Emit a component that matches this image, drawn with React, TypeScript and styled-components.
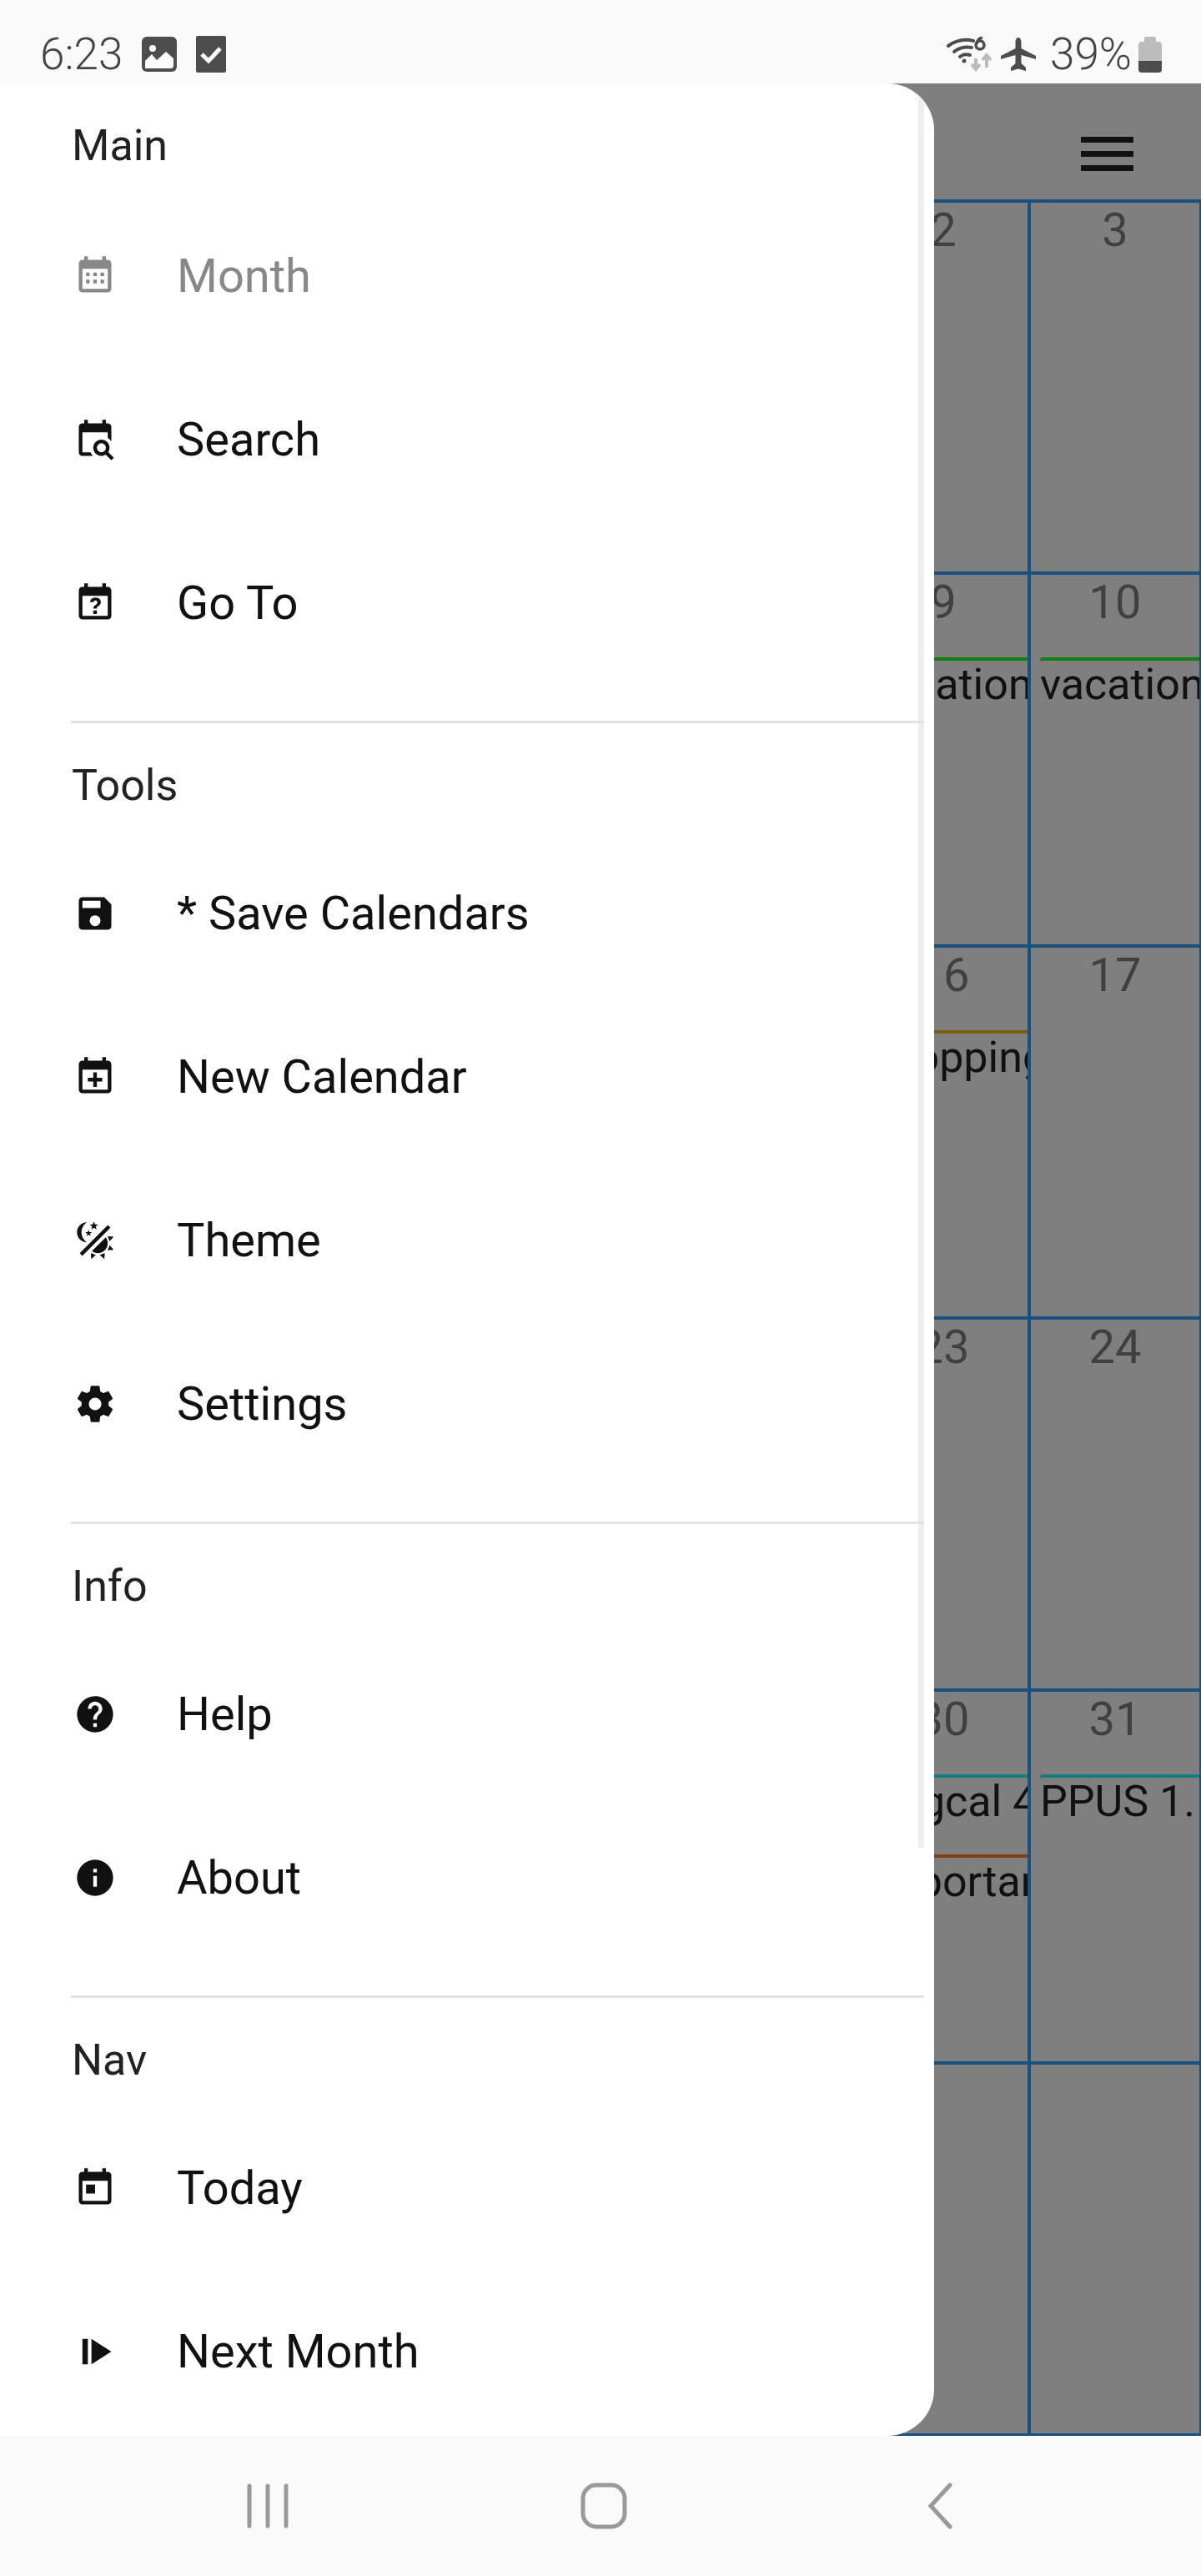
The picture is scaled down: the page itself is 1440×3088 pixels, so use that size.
import React from 'react';
import styled, { createGlobalStyle } from 'styled-components';

const GlobalStyle = createGlobalStyle`
  html, body {
    margin: 0;
    padding: 0;
    background: #fafafa;
    font-family: Roboto, "Liberation Sans", sans-serif;
  }
`;

const Screen = styled.div`
  width: 1440px;
  height: 3088px;
  display: flex;
  flex-direction: column;
  overflow: hidden;
`;

const StatusBar = styled.div`
  height: 100px;
  flex: none;
  background: #fafafa;
  color: #4d4d4d;
  display: flex;
  align-items: center;
  justify-content: space-between;
  padding: 30px 47px 0 48px;
  box-sizing: border-box;
`;

const StatusGroup = styled.div<{ $gap: number }>`
  display: flex;
  align-items: center;
  gap: ${p => p.$gap}px;
`;

const StatusText = styled.span`
  font-size: 53px;
  line-height: 56px;
  font-weight: 300;
  color: #444;
`;

const Stage = styled.div`
  position: relative;
  flex: 1;
  background: #fff;
  overflow: hidden;
`;

const Calendar = styled.div`
  display: flex;
  flex-direction: column;
  align-items: flex-end;
  height: 100%;
`;

const TopBar = styled.div`
  height: 141px;
  width: 100%;
  flex: none;
  display: flex;
  justify-content: flex-end;
  align-items: flex-start;
  padding: 64px 81px 0 0;
  box-sizing: border-box;
`;

const Hamburger = styled.div`
  width: 63px;
  display: flex;
  flex-direction: column;
  gap: 10px;
  span {
    display: block;
    height: 7px;
    background: #222;
  }
`;

const Grid = styled.div`
  width: 410px;
  display: grid;
  grid-template-columns: 206px 204px;
  grid-auto-rows: 446.33px;
  border-top: 4px solid #35a0fa;
  margin-top: -2px;
`;

const Cell = styled.div`
  border-right: 4px solid #35a0fa;
  border-bottom: 4px solid #35a0fa;
  min-width: 0;
  overflow: hidden;
  &:nth-child(even) {
    border-right-width: 2px;
  }
`;

const DayNumber = styled.div`
  height: 60px;
  margin-top: 3px;
  font-size: 56px;
  line-height: 60px;
  text-align: center;
  color: #808080;
`;

const CalEvent = styled.div<{ $color: string }>`
  margin: 36px 0 0 11px;
  border-top: 4px solid ${p => p.$color};
  border-top-left-radius: 3px;
  height: 60px;
  font-size: 52px;
  line-height: 58px;
  color: #222;
  white-space: nowrap;
  overflow: hidden;
  & + & {
    margin-top: 32px;
  }
`;

const Scrim = styled.div`
  position: absolute;
  inset: 0;
  background: rgba(0, 0, 0, 0.5);
`;

const Drawer = styled.nav`
  position: absolute;
  left: 0;
  top: 0;
  bottom: 0;
  width: 1120px;
  background: #fff;
  border-radius: 0 56px 56px 0;
  overflow: hidden;
  isolation: isolate;
`;

const ScrollThumb = styled.div`
  position: absolute;
  z-index: -1;
  left: 1101px;
  top: 16px;
  width: 7px;
  height: 2099px;
  background: #eeeeee;
`;

const Section = styled.section<{ $first?: boolean }>`
  margin: 0 12px 0 85px;
  padding-bottom: 43px;
  border-top: ${p => (p.$first ? 'none' : '3px solid #e2e2e2')};
`;

const SectionLabel = styled.div<{ $first?: boolean }>`
  padding: 47px 0 ${p => (p.$first ? 30 : 27)}px 1px;
  font-size: 52px;
  line-height: 56px;
  color: #222;
`;

const Item = styled.div<{ $active?: boolean }>`
  height: 196px;
  display: flex;
  align-items: center;
  gap: 72px;
  padding-left: 3px;
  font-size: 56px;
  color: ${p => (p.$active ? '#888888' : '#111111')};
`;

const ItemIcon = styled.svg`
  width: 52px;
  height: 52px;
  flex: none;
  fill: currentColor;
`;

const NavBar = styled.div`
  height: 168px;
  flex: none;
  background: #fafafa;
  display: grid;
  grid-template-columns: 400px 415px auto;
  align-items: center;
  padding-left: 296px;
  box-sizing: border-box;
`;

const NavIcon = styled.svg`
  display: block;
  fill: none;
  stroke: #999;
`;

const PlaneWrap = styled.div`
  display: flex;
  margin: 0 9px 0 2px;
`;

const icons = {
  month:
    'M9,10V12H7V10H9M13,10V12H11V10H13M17,10V12H15V10H17M19,3A2,2 0 0,1 21,5V19A2,2 0 0,1 19,21H5C3.89,21 3,20.1 3,19V5A2,2 0 0,1 5,3H6V1H8V3H16V1H18V3H19M19,19V8H5V19H19M9,14V16H7V14H9M13,14V16H11V14H13M17,14V16H15V14H17Z',
  search:
    'M15.5,12C18,12 20,14 20,16.5C20,17.38 19.75,18.21 19.31,18.9L22.39,22L21,23.39L17.88,20.32C17.19,20.75 16.37,21 15.5,21C13,21 11,19 11,16.5C11,14 13,12 15.5,12M15.5,14A2.5,2.5 0 0,0 13,16.5A2.5,2.5 0 0,0 15.5,19A2.5,2.5 0 0,0 18,16.5A2.5,2.5 0 0,0 15.5,14M19,8H5V19H9.5C9.81,19.75 10.26,20.42 10.81,21H5C3.89,21 3,20.1 3,19V5C3,3.89 3.89,3 5,3H6V1H8V3H16V1H18V3H19A2,2 0 0,1 21,5V13.03C20.5,12.22 19.8,11.54 19,11V8Z',
  goTo:
    'M6,1V3H5C3.89,3 3,3.89 3,5V19C3,20.1 3.9,21 5,21H19C20.1,21 21,20.1 21,19V5C21,3.9 20.1,3 19,3H18V1H16V3H8V1H6M5,8H19V19H5V8M12.19,9C11.32,9 10.62,9.2 10.08,9.59C9.56,10 9.3,10.57 9.31,11.36L9.32,11.39H11.25C11.26,11.09 11.35,10.86 11.53,10.7C11.71,10.55 11.93,10.47 12.19,10.47C12.5,10.47 12.76,10.57 12.94,10.75C13.12,10.94 13.2,11.2 13.2,11.5C13.2,11.82 13.13,12.09 12.97,12.32C12.83,12.55 12.62,12.75 12.36,12.91C11.85,13.25 11.5,13.55 11.31,13.82C11.11,14.08 11,14.5 11,15H13C13,14.69 13.04,14.44 13.13,14.26C13.22,14.08 13.39,13.9 13.64,13.74C14.09,13.5 14.46,13.21 14.75,12.81C15.04,12.41 15.19,12 15.19,11.5C15.19,10.74 14.92,10.13 14.38,9.68C13.85,9.23 13.12,9 12.19,9M11,16V18H13V16H11Z',
  save: 'M15,9H5V5H15M12,19A3,3 0 0,1 9,16A3,3 0 0,1 12,13A3,3 0 0,1 15,16A3,3 0 0,1 12,19M17,3H5C3.89,3 3,3.9 3,5V19A2,2 0 0,0 5,21H19A2,2 0 0,0 21,19V7L17,3Z',
  plus: 'M19 19V8H5V19H19M16 1H18V3H19C20.11 3 21 3.9 21 5V19C21 20.11 20.11 21 19 21H5C3.89 21 3 20.1 3 19V5C3 3.89 3.89 3 5 3H6V1H8V3H16V1M11 9.5H13V12.5H16V14.5H13V17.5H11V14.5H8V12.5H11V9.5Z',
  theme:
    'M7.5,2C5.71,3.15 4.5,5.18 4.5,7.5C4.5,9.82 5.71,11.85 7.53,13C4.46,13 2,10.54 2,7.5A5.5,5.5 0 0,1 7.5,2M19.07,3.5L20.5,4.93L4.93,20.5L3.5,19.07L19.07,3.5M12.89,5.93L11.41,5L9.97,6L10.39,4.3L9,3.24L10.75,3.12L11.33,1.47L12,3.1L13.73,3.13L12.38,4.26L12.89,5.93M9.59,9.54L8.43,8.81L7.31,9.59L7.65,8.27L6.56,7.44L7.92,7.35L8.37,6.06L8.88,7.33L10.24,7.36L9.19,8.23L9.59,9.54M19,13.5A5.5,5.5 0 0,1 13.5,19C12.28,19 11.15,18.6 10.24,17.93L17.93,10.24C18.6,11.15 19,12.28 19,13.5M14.6,20.08L17.37,18.93L17.13,22.28L14.6,20.08M18.93,17.38L20.08,14.61L22.28,17.15L18.93,17.38M20.08,12.42L18.94,9.64L22.28,9.88L20.08,12.42M9.63,18.93L12.4,20.08L9.87,22.27L9.63,18.93Z',
  cog: 'M12,15.5A3.5,3.5 0 0,1 8.5,12A3.5,3.5 0 0,1 12,8.5A3.5,3.5 0 0,1 15.5,12A3.5,3.5 0 0,1 12,15.5M19.43,12.97C19.47,12.65 19.5,12.33 19.5,12C19.5,11.67 19.47,11.34 19.43,11L21.54,9.37C21.73,9.22 21.78,8.95 21.66,8.73L19.66,5.27C19.54,5.05 19.27,4.96 19.05,5.05L16.56,6.05C16.04,5.66 15.5,5.32 14.87,5.07L14.5,2.42C14.46,2.18 14.25,2 14,2H10C9.75,2 9.54,2.18 9.5,2.42L9.13,5.07C8.5,5.32 7.96,5.66 7.44,6.05L4.95,5.05C4.73,4.96 4.46,5.05 4.34,5.27L2.34,8.73C2.21,8.95 2.27,9.22 2.46,9.37L4.57,11C4.53,11.34 4.5,11.67 4.5,12C4.5,12.33 4.53,12.65 4.57,12.97L2.46,14.63C2.27,14.78 2.21,15.05 2.34,15.27L4.34,18.73C4.46,18.95 4.73,19.03 4.95,18.95L7.44,17.94C7.96,18.34 8.5,18.68 9.13,18.93L9.5,21.58C9.54,21.82 9.75,22 10,22H14C14.25,22 14.46,21.82 14.5,21.58L14.87,18.93C15.5,18.67 16.04,18.34 16.56,17.94L19.05,18.95C19.27,19.03 19.54,18.95 19.66,18.73L21.66,15.27C21.78,15.05 21.73,14.78 21.54,14.63L19.43,12.97Z',
  help: 'M15.07,11.25L14.17,12.17C13.45,12.89 13,13.5 13,15H11V14.5C11,13.39 11.45,12.39 12.17,11.67L13.41,10.41C13.78,10.05 14,9.55 14,9C14,7.89 13.1,7 12,7A2,2 0 0,0 10,9H8A4,4 0 0,1 12,5A4,4 0 0,1 16,9C16,9.88 15.64,10.67 15.07,11.25M13,19H11V17H13M12,2A10,10 0 0,0 2,12A10,10 0 0,0 12,22A10,10 0 0,0 22,12C22,6.47 17.5,2 12,2Z',
  info: 'M13,9H11V7H13M13,17H11V11H13M12,2A10,10 0 0,0 2,12A10,10 0 0,0 12,22A10,10 0 0,0 22,12A10,10 0 0,0 12,2Z',
  today:
    'M7,10H12V15H7M19,19H5V8H19M19,3H18V1H16V3H8V1H6V3H5C3.89,3 3,3.9 3,5V19A2,2 0 0,0 5,21H19A2,2 0 0,0 21,19V5A2,2 0 0,0 19,3Z',
  next: 'M5,5V19H8V5M10,5V19L21,12',
};

const sections = [
  {
    title: 'Main',
    items: [
      { label: 'Month', icon: icons.month, active: true },
      { label: 'Search', icon: icons.search },
      { label: 'Go To', icon: icons.goTo },
    ],
  },
  {
    title: 'Tools',
    items: [
      { label: '* Save Calendars', icon: icons.save },
      { label: 'New Calendar', icon: icons.plus },
      { label: 'Theme', icon: icons.theme },
      { label: 'Settings', icon: icons.cog },
    ],
  },
  {
    title: 'Info',
    items: [
      { label: 'Help', icon: icons.help },
      { label: 'About', icon: icons.info },
    ],
  },
  {
    title: 'Nav',
    items: [
      { label: 'Today', icon: icons.today },
      { label: 'Next Month', icon: icons.next },
    ],
  },
];

const GREEN = '#25ff25';
const ORANGE = '#ffb428';
const TEAL = '#1effff';
const BROWN = '#fa8232';

const days: { day?: number; events?: { text: string; color: string }[] }[] = [
  { day: 2 },
  { day: 3 },
  { day: 9, events: [{ text: 'vacation', color: GREEN }] },
  { day: 10, events: [{ text: 'vacation', color: GREEN }] },
  { day: 16, events: [{ text: 'shopping', color: ORANGE }] },
  { day: 17 },
  { day: 23 },
  { day: 24 },
  {
    day: 30,
    events: [
      { text: 'Upgcal 4.0', color: TEAL },
      { text: 'Important', color: BROWN },
    ],
  },
  { day: 31, events: [{ text: 'PPUS 1.', color: TEAL }] },
  {},
  {},
];

const PictureIcon = () => (
  <svg width="42" height="42" viewBox="0 0 42 42">
    <rect width="42" height="42" rx="6" fill="#4d4d4d" />
    <circle cx="13" cy="14" r="4" fill="#fafafa" />
    <path d="M4 38V29L12 21L18 28L29 18L38 26V35Q38 38 35 38Z" fill="#fafafa" />
  </svg>
);

const TaskIcon = () => (
  <svg width="36" height="44" viewBox="0 0 36 44">
    <rect width="36" height="44" rx="2" fill="#4d4d4d" />
    <path d="M7 22L15 30L29 15" fill="none" stroke="#fafafa" strokeWidth="5" />
  </svg>
);

const WifiIcon = () => (
  <svg width="55" height="42" viewBox="0 0 55 42">
    <g fill="none" stroke="#4d4d4d" strokeWidth="4" strokeLinecap="round">
      <path d="M2 11Q16 1 32 5" />
      <path d="M9 18Q18 11 30 13" />
      <path d="M16 24Q21 20 28 22" />
    </g>
    <circle cx="21" cy="29" r="2.5" fill="#4d4d4d" />
    <circle cx="40" cy="10" r="5" fill="none" stroke="#4d4d4d" strokeWidth="3.5" />
    <path d="M36 9Q37 2 43 1" fill="none" stroke="#4d4d4d" strokeWidth="3.5" />
    <path
      d="M35 26V39M30 33L35 39L40 33M48 37V22M43 28L48 22L53 28"
      fill="none"
      stroke="#bcbcbc"
      strokeWidth="4"
    />
  </svg>
);

const PlaneIcon = () => (
  <svg width="42" height="40" viewBox="0 0 42 40">
    <path
      d="M21 0C18.5 0 17.5 3 17.5 6V13L0 22V26L17.5 21V31L12 36V40L21 37.5L30 40V36L24.5 31V21L42 26V22L24.5 13V6C24.5 3 23.5 0 21 0Z"
      fill="#4d4d4d"
    />
  </svg>
);

const BatteryIcon = () => (
  <svg width="28" height="43" viewBox="0 0 28 43">
    <path
      d="M9 0H19Q21 0 21 2V6H24Q28 6 28 10V29H0V10Q0 6 4 6H7V2Q7 0 9 0Z"
      fill="#bcbcbc"
    />
    <path d="M0 29H28V39Q28 43 24 43H4Q0 43 0 39Z" fill="#4d4d4d" />
  </svg>
);

const App: React.FC = () => {
  return (
    <Screen>
      <GlobalStyle />
      <StatusBar>
        <StatusGroup $gap={23}>
          <StatusText>6:23</StatusText>
          <PictureIcon />
          <TaskIcon />
        </StatusGroup>
        <StatusGroup $gap={8}>
          <WifiIcon />
          <PlaneWrap>
            <PlaneIcon />
          </PlaneWrap>
          <StatusText>39%</StatusText>
          <BatteryIcon />
        </StatusGroup>
      </StatusBar>

      <Stage>
        <Calendar>
          <TopBar>
            <Hamburger>
              <span />
              <span />
              <span />
            </Hamburger>
          </TopBar>
          <Grid>
            {days.map((cell, i) => (
              <Cell key={i}>
                {cell.day && <DayNumber>{cell.day}</DayNumber>}
                {cell.events?.map(ev => (
                  <CalEvent key={ev.text} $color={ev.color}>
                    {ev.text}
                  </CalEvent>
                ))}
              </Cell>
            ))}
          </Grid>
        </Calendar>
        <Scrim />
        <Drawer>
          <ScrollThumb />
          {sections.map((section, i) => (
            <Section key={section.title} $first={i === 0}>
              <SectionLabel $first={i === 0}>{section.title}</SectionLabel>
              {section.items.map(item => (
                <Item key={item.label} $active={item.active}>
                  <ItemIcon viewBox="0 0 24 24">
                    <path d={item.icon} />
                  </ItemIcon>
                  {item.label}
                </Item>
              ))}
            </Section>
          ))}
        </Drawer>
      </Stage>

      <NavBar>
        <NavIcon width="50" height="54" viewBox="0 0 50 54" strokeWidth="5" strokeLinecap="round">
          <path d="M3 3V51M25 3V51M47 3V51" />
        </NavIcon>
        <NavIcon width="56" height="56" viewBox="0 0 56 56" strokeWidth="5">
          <rect x="3" y="3" width="50" height="50" rx="16" />
        </NavIcon>
        <NavIcon width="32" height="56" viewBox="0 0 32 56" strokeWidth="5" strokeLinecap="round">
          <path d="M28 3L5 28L28 53" />
        </NavIcon>
      </NavBar>
    </Screen>
  );
};

export default App;
